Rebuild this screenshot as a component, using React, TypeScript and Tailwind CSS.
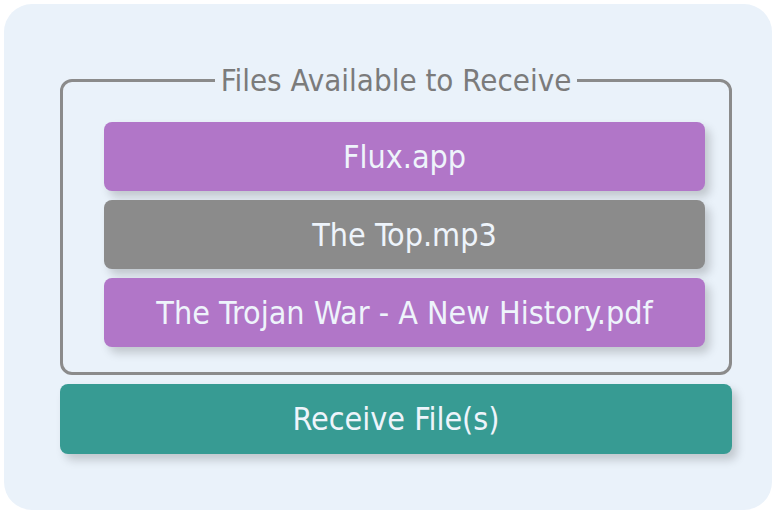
import React from "react";

const files = [
  { name: "Flux.app", color: "bg-[#b176c8]" },
  { name: "The Top.mp3", color: "bg-[#8b8b8b]" },
  { name: "The Trojan War - A New History.pdf", color: "bg-[#b176c8]" },
];

const App = () => {
  return (
    <div
      className="w-[778px] h-[514px] bg-white py-1 pl-1 pr-[6px]"
      style={{ fontFamily: '"DejaVu Sans Condensed", "DejaVu Sans", sans-serif' }}
    >
      <div className="h-full rounded-[28px] bg-[#eaf2fa] pl-14 pr-10 pt-[58px]">
        <fieldset className="border-[3px] border-[#8b8b8b] rounded-xl px-0 pb-[25px] pt-[24px]">
          <legend className="mx-auto px-[6px] text-[31px] leading-[36px] text-[#7b7b7b]">
            Files Available to Receive
          </legend>
          <div className="flex flex-col gap-[9px] pl-[41px] pr-[24px]">
            {files.map((f) => (
              <div
                key={f.name}
                className={`${f.color} h-[69px] rounded-lg flex items-center justify-center text-[32px] text-[#eef4fb] shadow-[5px_6px_10px_rgba(0,0,0,0.18)]`}
              >
                {f.name}
              </div>
            ))}
          </div>
        </fieldset>
        <button className="mt-[9px] w-full h-[70px] rounded-lg bg-[#379b93] text-[32px] text-[#eef4fb] shadow-[5px_6px_10px_rgba(0,0,0,0.18)]">
          Receive File(s)
        </button>
      </div>
    </div>
  );
};

export default App;
